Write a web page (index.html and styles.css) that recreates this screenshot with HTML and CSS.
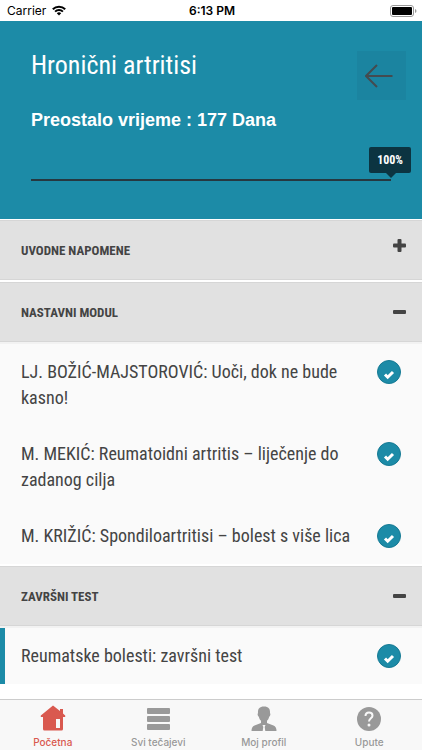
FILE: index.html
```html
<!DOCTYPE html>
<html lang="hr">
  <head>
    <meta charset="UTF-8" />
    <meta name="viewport" content="width=device-width, initial-scale=1.0" />
    <title>Hronični artritisi</title>
    <link rel="stylesheet" href="styles.css">
  </head>
  <body>
    <div class="status">
      <div class="carrier">
        <span>Carrier</span>
        <svg width="14" height="11" viewBox="0 0 14 11" fill="none" stroke="#000" stroke-width="2">
          <path d="M.8 4.2a8.8 8.8 0 0 1 12.4 0M3.1 6.6a5.5 5.5 0 0 1 7.8 0" />
          <path d="M7 10.6 4.8 8.3a3.1 3.1 0 0 1 4.4 0z" fill="#000" stroke="none" />
        </svg>
      </div>
      <time>6:13 PM</time>
      <svg class="battery" width="27" height="12" viewBox="0 0 27 12">
        <rect x=".5" y=".5" width="23" height="11" rx="2.5" fill="none" stroke="#999" />
        <rect x="2" y="2" width="20" height="8" rx="1" />
        <path d="M25 4q1.5.5 1.5 2t-1.5 2z" fill="#999" />
      </svg>
    </div>

    <header class="hero">
      <div class="hero-top">
        <div>
          <h1>Hronični artritisi</h1>
          <p class="remaining">Preostalo vrijeme : 177 Dana</p>
        </div>
        <button class="back" aria-label="Natrag">
          <svg width="28" height="24" viewBox="0 0 28 24" fill="none" stroke="#444b50" stroke-width="2">
            <path d="M27.500 12H1M12 1 1 12l11 11" />
          </svg>
        </button>
      </div>
      <div class="progress">
        <div class="progress-bar" style="width: 100%">
          <span class="tip">100%</span>
        </div>
      </div>
    </header>

    <main>
      <section>
        <h2>
          <button class="toggle" aria-expanded="false">
            <span>UVODNE NAPOMENE</span>
            <svg class="plus" width="13" height="13" viewBox="0 0 13 13">
              <rect y="4.500" width="13" height="4" rx="1" />
              <rect x="4.500" width="4" height="13" rx="1" />
            </svg>
          </button>
        </h2>
      </section>
      <section>
        <h2>
          <button class="toggle" aria-expanded="true">
            <span>NASTAVNI MODUL</span>
            <svg width="13" height="4" viewBox="0 0 13 4"><rect width="13" height="4" rx="1" /></svg>
          </button>
        </h2>
        <ul>
          <li>
            <a href="#">LJ. BOŽIĆ-MAJSTOROVIĆ: Uoči, dok ne bude kasno!</a>
            <svg class="check" width="24" height="24" viewBox="0 0 24 24">
              <circle cx="12" cy="12" r="11.5" />
              <path d="m8 14.500 2.700 2.700 5.300-5.200" />
            </svg>
          </li>
          <li>
            <a href="#">M. MEKIĆ: Reumatoidni artritis – liječenje do zadanog cilja</a>
            <svg class="check" width="24" height="24" viewBox="0 0 24 24">
              <circle cx="12" cy="12" r="11.5" />
              <path d="m8 14.500 2.700 2.700 5.300-5.200" />
            </svg>
          </li>
          <li>
            <a href="#">M. KRIŽIĆ: Spondiloartritisi – bolest s više lica</a>
            <svg class="check" width="24" height="24" viewBox="0 0 24 24">
              <circle cx="12" cy="12" r="11.5" />
              <path d="m8 14.500 2.700 2.700 5.300-5.200" />
            </svg>
          </li>
        </ul>
      </section>
      <section>
        <h2>
          <button class="toggle" aria-expanded="true">
            <span>ZAVRŠNI TEST</span>
            <svg width="13" height="4" viewBox="0 0 13 4"><rect width="13" height="4" rx="1" /></svg>
          </button>
        </h2>
        <ul>
          <li class="current">
            <a href="#">Reumatske bolesti: završni test</a>
            <svg class="check" width="24" height="24" viewBox="0 0 24 24">
              <circle cx="12" cy="12" r="11.5" />
              <path d="m8 14.500 2.700 2.700 5.300-5.200" />
            </svg>
          </li>
        </ul>
      </section>
    </main>

    <nav class="tabs">
      <a href="#" class="active">
        <svg width="26" height="26" viewBox="0 0 26 26">
          <path fill-rule="evenodd" d="M13 .5.8 10.500V12H3v12q0 1.500 1.500 1.500h17q1.500 0 1.500-1.500V12h2.200v-1.500L23 8.500V4h-3v2zM16 14h4v9h-4z" />
        </svg>
        <span>Početna</span>
      </a>
      <a href="#">
        <svg width="26" height="26" viewBox="0 0 26 26">
          <rect x="2" y="3" width="23" height="6" rx="1" />
          <rect x="2" y="11" width="23" height="6" rx="1" />
          <rect x="2" y="19" width="23" height="6" rx="1" />
        </svg>
        <span>Svi tečajevi</span>
      </a>
      <a href="#">
        <svg width="26" height="26" viewBox="0 0 26 26">
          <path d="M13 1.500c4.500 0 6.300 2.300 6 6.500.8 1 .3 3-.8 3.700-.5 2-1.200 3-2.200 4V18l6.500 2.500q3 1.200 3 5.500H14.300l-.6-4 .8-2h-3l.8 2-.6 4H.5q0-4.300 3-5.500L10 18v-2.300c-1-1-1.700-2-2.200-4C6.700 11 6.200 9 7 8c-.3-4.200 1.500-6.500 6-6.500z" />
        </svg>
        <span>Moj profil</span>
      </a>
      <a href="#">
        <svg width="26" height="26" viewBox="0 0 26 26">
          <circle cx="13" cy="14" r="12" />
          <path d="M9.500 11Q9.500 7.500 13 7.500t3.500 3.200c0 2.500-3.500 2.700-3.500 5.800" fill="none" stroke="#f8f8f8" stroke-width="2" />
          <circle cx="13" cy="20" r="1.5" fill="#f8f8f8" />
        </svg>
        <span>Upute</span>
      </a>
    </nav>
  </body>
</html>
```
FILE: styles.css
```css
* {
  box-sizing: border-box;
}
body {
  margin: 0;
  min-height: 100vh;
  display: flex;
  flex-direction: column;
  background: #fff;
  color: #444;
  font-family: "Roboto Condensed", "Liberation Sans Narrow", Roboto, sans-serif;
}
h1,
h2,
p,
ul {
  margin: 0;
  padding: 0;
  font-weight: normal;
}
button {
  border: 0;
  font-family: inherit;
  color: inherit;
}
a {
  color: inherit;
  text-decoration: none;
}

.status {
  display: grid;
  grid-template-columns: 1fr auto 1fr;
  align-items: center;
  height: 21px;
  padding: 0 5px 0 7px;
  color: #000;
  font: 12px Inter, sans-serif;
}
.status time {
  font-weight: 600;
}
.carrier {
  display: flex;
  align-items: center;
  gap: 6px;
}
.battery {
  justify-self: end;
}

.hero {
  padding: 28px 31px 37px;
  background: #1c8ba7;
  color: #fff;
}
.hero-top {
  display: flex;
  justify-content: space-between;
}
h1 {
  font-size: 26px;
  line-height: 32px;
}
.remaining {
  margin-top: 28px;
  font: bold 18px/22px "Liberation Sans", sans-serif;
}
.back {
  display: flex;
  align-items: center;
  justify-content: center;
  width: 49px;
  height: 49px;
  margin: 2px -15px 0 0;
  padding: 0 6px 0 0;
  background: #1b84a0;
}
.progress {
  margin-top: 48px;
}
.progress-bar {
  position: relative;
  height: 2px;
  margin-bottom: 1px;
  background: #263840;
}
.tip {
  position: absolute;
  right: -20px;
  bottom: 8px;
  padding: 0 8px;
  border-radius: 2px;
  background: #0c3441;
  font-size: 12px;
  font-weight: bold;
  line-height: 26px;
}
.tip::after {
  content: "";
  position: absolute;
  top: 100%;
  right: 15px;
  border: 5px solid transparent;
  border-top-color: #0c3441;
  border-bottom: 0;
}

main {
  flex: 1;
  padding: 1px 0 52px;
}
section + section {
  margin-top: 2px;
}
.toggle {
  display: flex;
  align-items: center;
  justify-content: space-between;
  width: 100%;
  height: 60px;
  padding: 0 16px 0 21px;
  border: solid #d6d6d6;
  border-width: 1px 0;
  background: #e1e1e1;
  font-size: 13px;
  font-weight: bold;
}
.toggle svg {
  fill: #444;
}
.toggle .plus {
  margin-bottom: 10px;
}
ul {
  list-style: none;
  border-top: 2px solid #f2f2f2;
  background: #fafafa;
}
li {
  display: flex;
  align-items: flex-start;
  justify-content: space-between;
  gap: 16px;
  padding: 15px 21px;
  font-size: 18px;
  line-height: 26px;
}
.current {
  padding-left: 16px;
  border-left: 5px solid #1c8ba7;
}
.check {
  flex: none;
  margin-top: 1px;
  fill: #1c8ba7;
  stroke: #167a94;
}
.check path {
  fill: none;
  stroke: #fff;
  stroke-width: 3;
}

.tabs {
  position: fixed;
  bottom: 0;
  left: 0;
  right: 0;
  display: grid;
  grid-template-columns: repeat(4, 1fr);
  height: 51px;
  border-top: 1px solid #ccc;
  background: #f8f8f8;
  font: 500 10px/12px Inter, sans-serif;
}
.tabs a {
  display: flex;
  flex-direction: column;
  align-items: center;
  gap: 5px;
  padding-top: 5px;
  color: #999;
}
.tabs svg {
  fill: currentColor;
}
.tabs .active {
  color: #d9594f;
}
```
